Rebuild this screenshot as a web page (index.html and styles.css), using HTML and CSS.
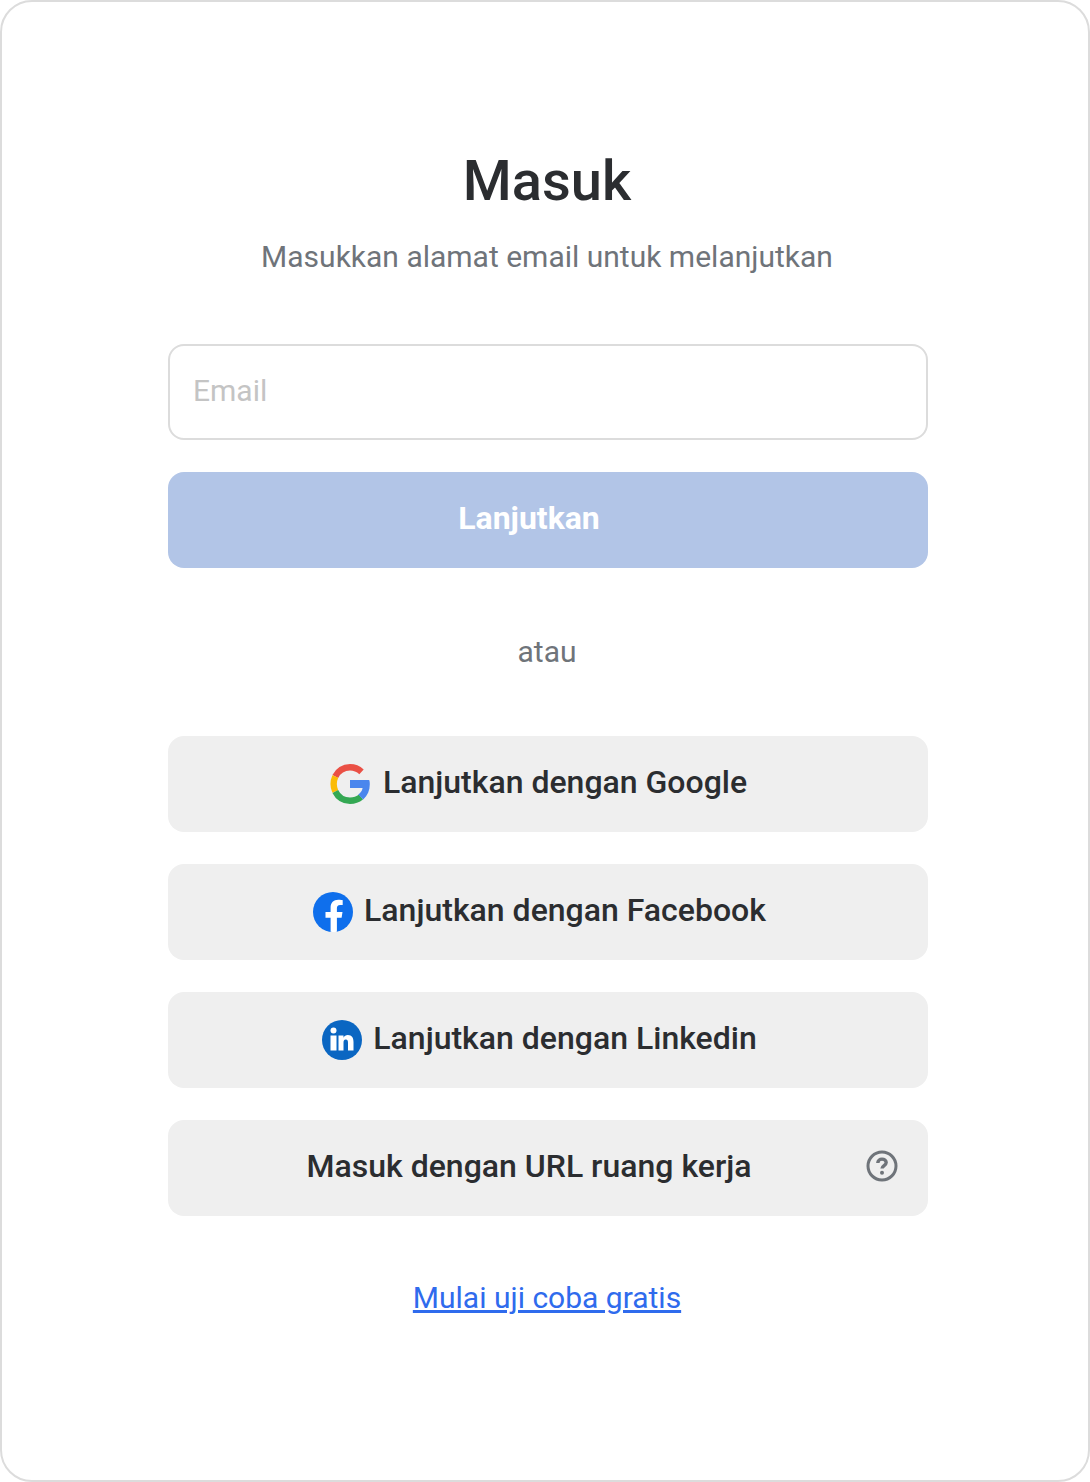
FILE: index.html
```html
<!DOCTYPE html>
<html lang="id">
<head>
<meta charset="utf-8">
<title>Masuk</title>
<link rel="stylesheet" href="styles.css">
</head>
<body>
<main class="card">
  <div class="form">
    <h1 class="title">Masuk</h1>
    <p class="subtitle">Masukkan alamat email untuk melanjutkan</p>
    <input class="email" type="email" placeholder="Email">
    <button class="btn btn-primary btn-shift" type="button"><span class="label">Lanjutkan</span></button>
    <p class="or">atau</p>
    <div class="socials">
      <button class="btn btn-social" type="button">
        <svg class="icon" viewBox="0 0 40 40">
          <path fill="none" stroke="#ea5045" stroke-width="6.400" d="M31.500 7.800C28.500 5 25 3.200 20 3.200 13.500 3.200 8 7 5.300 12.500"/>
          <path fill="none" stroke="#fbbc05" stroke-width="6.400" d="M5.300 12.500C3.300 17 3.300 23 5.300 27.500"/>
          <path fill="none" stroke="#34a853" stroke-width="6.400" d="M5.300 27.500C8 33 13.500 36.800 20 36.800c4.200 0 8-1.300 11-3.700"/>
          <path fill="#4a86ed" d="M20 16H39.200c.5 1.400.6 2.700.6 4.300 0 6.100-2.200 11.200-6.600 15.200l-4.900-4.900c2.200-1.700 3.700-3.400 4.300-6.600H20z"/>
        </svg>
        <span class="label">Lanjutkan dengan Google</span>
      </button>
      <button class="btn btn-social btn-tight" type="button">
        <svg class="icon" viewBox="0 0 40 40"><circle cx="20" cy="20" r="20" fill="#0f6fec"/><path fill="#fff" d="M28.600 25.800l.9-5.800h-5.600v-3.800c0-1.600.8-3.100 3.300-3.100H29.700V8.200s-2.300-.4-4.500-.4c-4.600 0-7.600 2.800-7.600 7.800V20h-5.100v5.800h5.100v14c1 .2 2.100.2 3.200.2s2.100-.1 3.100-.2v-14z"/></svg>
        <span class="label">Lanjutkan dengan Facebook</span>
      </button>
      <button class="btn btn-social btn-tight" type="button">
        <svg class="icon" viewBox="0 0 40 40"><circle cx="20" cy="20" r="20" fill="#0a66c2"/><circle cx="11.500" cy="10.500" r="3" fill="#fff"/><path fill="#fff" d="M8.500 15.500h6v15h-6zM16.500 15.500h5v2.200c.9-1.500 2.300-2.600 4.300-2.600 4.300 0 5.700 3 5.700 6.900v8.500h-5.500v-7.500c0-2-.3-3.500-2.200-3.500s-2.300 1.500-2.300 3.500v7.500h-5z"/></svg>
        <span class="label">Lanjutkan dengan Linkedin</span>
      </button>
      <button class="btn btn-social btn-shift" type="button">
        <span class="label">Masuk dengan URL ruang kerja</span>
        <svg class="help" viewBox="0 0 32 32"><circle cx="16" cy="16" r="14" fill="none" stroke="#6f747a" stroke-width="3"/><path fill="none" stroke="#6f747a" stroke-width="3.400" d="M11.800 13c0-2.400 1.900-3.900 4.200-3.900s4.200 1.400 4.200 3.500c0 2.800-4.200 3.100-4.200 5.900"/><circle cx="16" cy="22.800" r="2" fill="#6f747a"/></svg>
      </button>
    </div>
    <a class="trial" href="#">Mulai uji coba gratis</a>
  </div>
</main>
</body>
</html>
```

FILE: styles.css
```css
* { box-sizing: border-box; }
html, body { margin: 0; padding: 0; background: #fff; }
body { font-family: Roboto, "Liberation Sans", sans-serif; }

.card {
  width: 1090px;
  height: 1482px;
  border: 2px solid #dcdcdc;
  border-radius: 32px;
  padding-left: 6px;
  display: flex;
  justify-content: center;
  background: #fff;
}

.form {
  width: 760px;
  display: flex;
  flex-direction: column;
  align-items: stretch;
  padding-top: 145px;
}

.title {
  margin: 0;
  padding-right: 2px;
  font-size: 56px;
  line-height: 68px;
  font-weight: 500;
  color: #2b2d30;
  text-align: center;
}

.subtitle {
  margin: 21px 0 0;
  padding-right: 2px;
  font-size: 30px;
  line-height: 42px;
  color: #6f747a;
  text-align: center;
}

.email {
  margin-top: 66px;
  height: 96px;
  padding: 0 23px 4px;
  border: 2px solid #dcdcdc;
  border-radius: 16px;
  font: 400 30px Roboto, sans-serif;
  color: #2b2d30;
  outline: none;
  background: #fff;
}
.email::placeholder { color: #c4c4c4; opacity: 1; }

.btn {
  display: flex;
  align-items: center;
  justify-content: center;
  height: 96px;
  width: 100%;
  border: 0;
  border-radius: 16px;
  font: 500 32px Roboto, sans-serif;
  cursor: pointer;
  position: relative;
}

.label { margin-bottom: 4px; }

.btn-primary {
  margin-top: 32px;
  background: #b2c5e7;
  color: #fff;
  font-weight: 700;
}

.btn-social {
  background: #efefef;
  color: #2b2d30;
  gap: 13px;
  padding-right: 25px;
}

.btn.btn-tight {
  gap: 11px;
  padding-right: 23px;
}

.btn.btn-shift { padding-right: 44px; }

.or {
  margin: 64px 0;
  padding-right: 2px;
  font-size: 30px;
  line-height: 40px;
  color: #6f747a;
  text-align: center;
}

.socials {
  display: flex;
  flex-direction: column;
  gap: 32px;
}

.icon { width: 40px; height: 40px; flex: none; }

.help {
  position: absolute;
  right: 30px;
  top: 30px;
  width: 32px;
  height: 32px;
}

.trial {
  margin-top: 64px;
  padding-right: 2px;
  font-size: 30px;
  line-height: 36px;
  color: #2f6bed;
  text-align: center;
  text-decoration: underline;
}
```
